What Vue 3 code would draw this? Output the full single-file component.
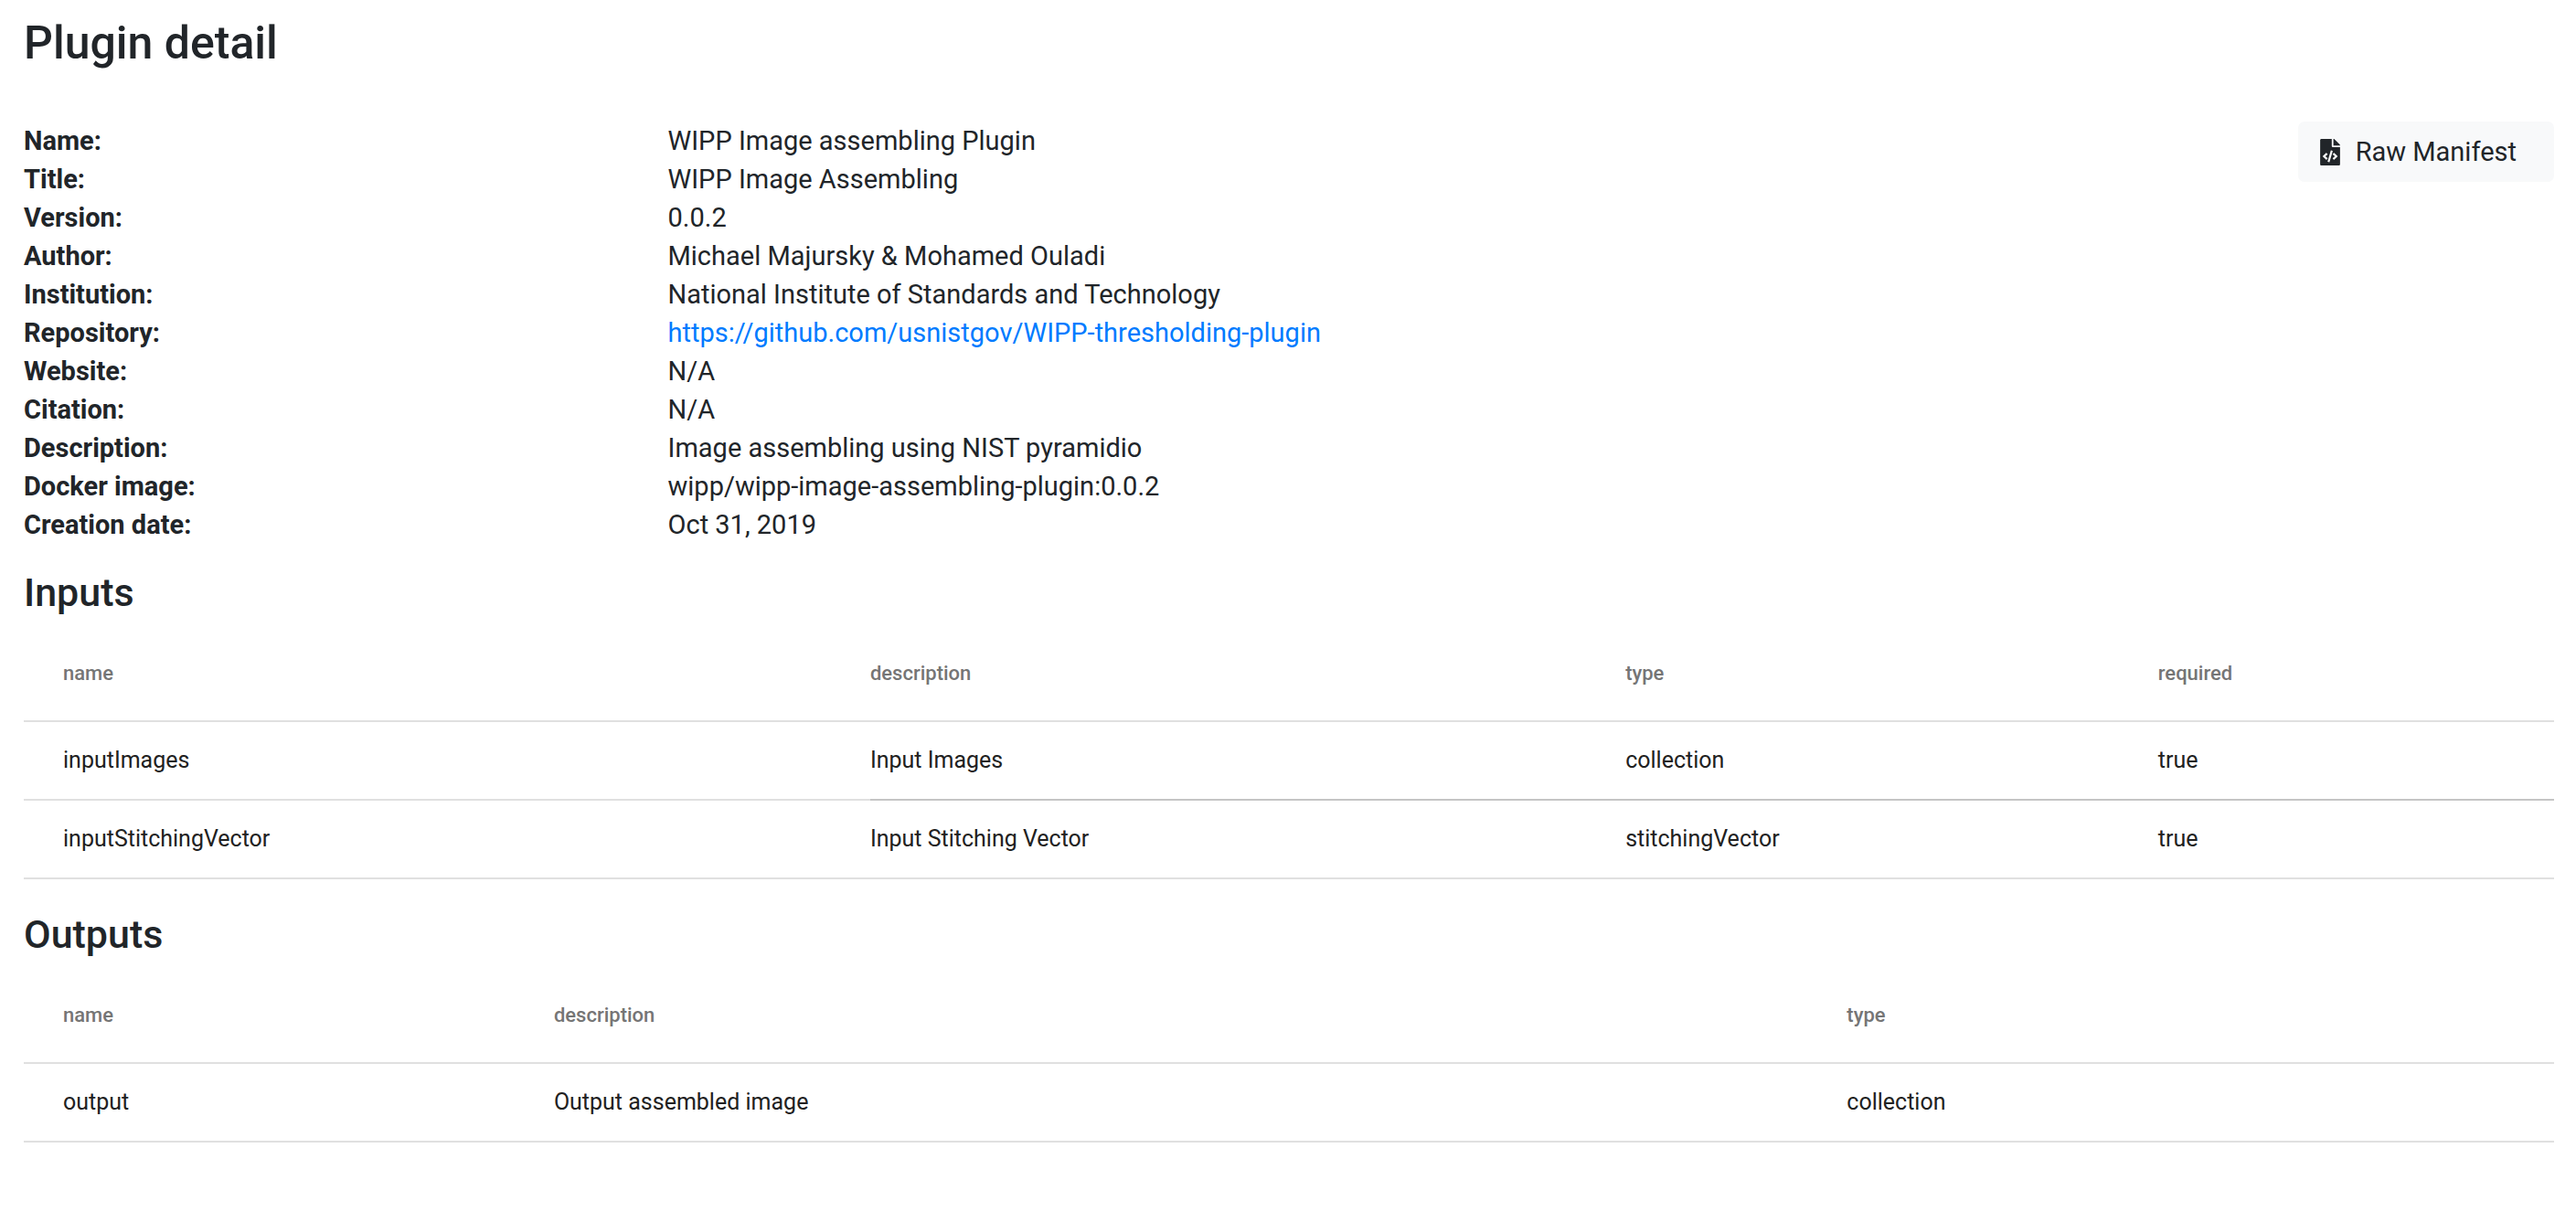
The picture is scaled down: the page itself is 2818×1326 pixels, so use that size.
<script setup>
const details = [
  { label: 'Name:', value: 'WIPP Image assembling Plugin' },
  { label: 'Title:', value: 'WIPP Image Assembling' },
  { label: 'Version:', value: '0.0.2' },
  { label: 'Author:', value: 'Michael Majursky & Mohamed Ouladi' },
  { label: 'Institution:', value: 'National Institute of Standards and Technology' },
  { label: 'Repository:', value: 'https://github.com/usnistgov/WIPP-thresholding-plugin', link: true },
  { label: 'Website:', value: 'N/A' },
  { label: 'Citation:', value: 'N/A' },
  { label: 'Description:', value: 'Image assembling using NIST pyramidio' },
  { label: 'Docker image:', value: 'wipp/wipp-image-assembling-plugin:0.0.2' },
  { label: 'Creation date:', value: 'Oct 31, 2019' }
]

const inputs = [
  { name: 'inputImages', description: 'Input Images', type: 'collection', required: true },
  { name: 'inputStitchingVector', description: 'Input Stitching Vector', type: 'stitchingVector', required: true }
]

const outputs = [{ name: 'output', description: 'Output assembled image', type: 'collection' }]
</script>

<template>
  <main class="page">
    <h1>Plugin detail</h1>

    <section class="summary">
      <dl class="details">
        <div v-for="item in details" :key="item.label" class="detail">
          <dt>{{ item.label }}</dt>
          <dd>
            <a v-if="item.link" :href="item.value">{{ item.value }}</a>
            <template v-else>{{ item.value }}</template>
          </dd>
        </div>
      </dl>
      <button type="button" class="manifest">
        <svg class="icon" viewBox="0 0 384 512" aria-hidden="true">
          <path fill="currentColor" d="M384 121.941V128H256V0h6.059c6.365 0 12.47 2.529 16.971 7.029l97.941 97.941A24.005 24.005 0 0 1 384 121.941zM248 160c-13.2 0-24-10.8-24-24V0H24C10.745 0 0 10.745 0 24v464c0 13.255 10.745 24 24 24h336c13.255 0 24-10.745 24-24V160H248zM123.206 400.505a5.4 5.4 0 0 1-7.633.246l-64.866-60.812a5.4 5.4 0 0 1 0-7.879l64.866-60.812a5.4 5.4 0 0 1 7.633.246l19.579 20.885a5.4 5.4 0 0 1-.372 7.747L101.65 336l40.763 35.874a5.4 5.4 0 0 1 .372 7.747l-19.579 20.884zm51.295 50.479l-27.453-7.97a5.402 5.402 0 0 1-3.681-6.692l61.44-211.626a5.402 5.402 0 0 1 6.692-3.681l27.452 7.97a5.4 5.4 0 0 1 3.68 6.692l-61.44 211.626a5.397 5.397 0 0 1-6.69 3.681zm160.792-111.045l-64.866 60.812a5.4 5.4 0 0 1-7.633-.246l-19.58-20.885a5.4 5.4 0 0 1 .372-7.747L284.35 336l-40.763-35.874a5.4 5.4 0 0 1-.372-7.747l19.58-20.885a5.4 5.4 0 0 1 7.633-.246l64.866 60.812a5.4 5.4 0 0 1-.001 7.879z" />
        </svg>
        <span>Raw Manifest</span>
      </button>
    </section>

    <h2 id="inputs-title">Inputs</h2>
    <table class="inputs" aria-labelledby="inputs-title">
      <thead>
        <tr>
          <th scope="col">name</th>
          <th scope="col">description</th>
          <th scope="col">type</th>
          <th scope="col">required</th>
        </tr>
      </thead>
      <tbody>
        <tr v-for="row in inputs" :key="row.name">
          <td>{{ row.name }}</td>
          <td>{{ row.description }}</td>
          <td>{{ row.type }}</td>
          <td>{{ row.required }}</td>
        </tr>
      </tbody>
    </table>

    <h2 id="outputs-title">Outputs</h2>
    <table class="outputs" aria-labelledby="outputs-title">
      <thead>
        <tr>
          <th scope="col">name</th>
          <th scope="col">description</th>
          <th scope="col">type</th>
        </tr>
      </thead>
      <tbody>
        <tr v-for="row in outputs" :key="row.name">
          <td>{{ row.name }}</td>
          <td>{{ row.description }}</td>
          <td>{{ row.type }}</td>
        </tr>
      </tbody>
    </table>
  </main>
</template>

<style>
body {
  margin: 0;
  background: #fff;
}
</style>

<style scoped>
.page {
  padding: 18px 24px 28px 26px;
  color: #212529;
  font-family: Roboto, 'Liberation Sans', sans-serif;
  font-size: 29px;
  line-height: 42px;
}

h1,
h2 {
  margin: 0;
  font-weight: 500;
}

h1 {
  margin-bottom: 57px;
  font-size: 50px;
  line-height: 58px;
}

h2 {
  margin: 28px 0 17px;
  font-size: 43px;
  line-height: 50px;
}

table + h2 {
  margin-top: 35px;
}

.summary {
  display: flex;
  align-items: flex-start;
  justify-content: space-between;
}

.details {
  flex: 1;
  margin: 0;
}

.detail {
  display: flex;
}

dt {
  flex: none;
  width: 25vw;
  font-weight: 700;
}

dd {
  margin: 0;
}

a {
  color: #007bff;
  text-decoration: none;
}

.manifest {
  display: flex;
  align-items: center;
  gap: 17px;
  padding: 12px 41px 12px 24px;
  border: 0;
  border-radius: 7px;
  background: #f8f9fa;
  color: inherit;
  font: inherit;
  cursor: pointer;
}

.icon {
  width: 22px;
  height: 29px;
}

table {
  width: 100%;
  table-layout: fixed;
  border-spacing: 0;
}

th,
td {
  box-sizing: border-box;
  padding: 0;
  border-bottom: 2px solid #e0e0e0;
  text-align: left;
  vertical-align: middle;
}

th {
  height: 100px;
  padding-bottom: 4px;
  color: #757575;
  font-size: 22px;
  font-weight: 500;
}

td {
  height: 86px;
  color: #212121;
  font-size: 25px;
}

th:first-child,
td:first-child {
  padding-left: 43px;
}

tbody tr:not(:last-child) td:not(:first-child) {
  border-bottom-color: #c5c5c5;
}

.inputs th:nth-child(1) {
  width: 33.45%;
}

.inputs th:nth-child(2) {
  width: 29.85%;
}

.inputs th:nth-child(3) {
  width: 21.05%;
}

.outputs th:nth-child(1) {
  width: 20.95%;
}

.outputs th:nth-child(2) {
  width: 51.1%;
}
</style>
